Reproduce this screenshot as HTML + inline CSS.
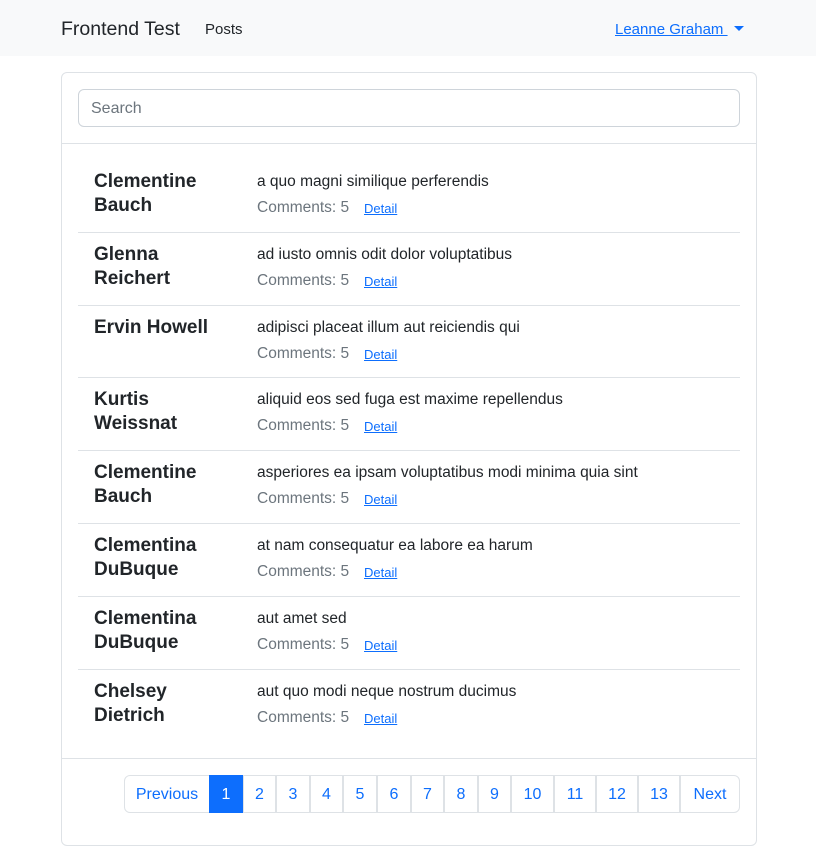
<!DOCTYPE html><html><head><style>
*{box-sizing:border-box}body{margin:0;font-family:"Liberation Sans",sans-serif;color:#212529;background:#fff;width:816px;height:857px;position:relative;overflow:hidden}
.nav{position:absolute;left:0;top:0;width:816px;height:56px;background:#f8f9fa}
.a{position:absolute;white-space:nowrap}
.card{position:absolute;left:61px;top:72px;width:696px;height:774px;border:1px solid #dee2e6;border-radius:6px}
.search{position:absolute;left:78px;top:89px;width:662px;height:38px;border:1px solid #ced4da;border-radius:6px;padding:0 12px;line-height:38px;font-size:16px;color:#6c757d}
.hr{position:absolute;height:1px;background:#dee2e6}
.name{position:absolute;left:94px;font-size:19px;font-weight:bold;line-height:24px}
.t{position:absolute;left:257px;font-size:15.5px}
.c{position:absolute;left:257px;font-size:15.5px;color:#6c757d}
.d{position:absolute;left:364px;font-size:13px;color:#0d6efd;text-decoration:underline}
.pg{position:absolute;top:775px;height:38px;border:1px solid #dee2e6;margin-left:-1px;color:#0d6efd;font-size:16px;text-align:center;line-height:38px}
</style></head><body>
<div class="nav"></div>
<div class="a" style="left:61px;top:18px;font-size:19.5px">Frontend Test</div>
<div class="a" style="left:205px;top:21px;font-size:15px">Posts</div>
<div class="a" style="left:615px;top:21px;font-size:15px;color:#0d6efd;text-decoration:underline">Leanne Graham&nbsp;</div>
<div class="a" style="left:734px;top:26px;width:0;height:0;border-left:5px solid transparent;border-right:5px solid transparent;border-top:5px solid #0d6efd"></div>
<div class="card"></div>
<div class="search">Search</div>
<div class="hr" style="left:62px;top:143px;width:694px"></div>
<div class="hr" style="left:62px;top:758px;width:694px"></div>
<div class="name" style="top:170px">Clementine<br>Bauch</div><div class="t" style="top:173px">a quo magni similique perferendis</div><div class="c" style="top:199px">Comments: 5</div><div class="d" style="top:201px">Detail</div>
<div class="hr" style="left:78px;top:232px;width:662px"></div>
<div class="name" style="top:243px">Glenna<br>Reichert</div><div class="t" style="top:246px">ad iusto omnis odit dolor voluptatibus</div><div class="c" style="top:272px">Comments: 5</div><div class="d" style="top:274px">Detail</div>
<div class="hr" style="left:78px;top:305px;width:662px"></div>
<div class="name" style="top:316px">Ervin Howell</div><div class="t" style="top:319px">adipisci placeat illum aut reiciendis qui</div><div class="c" style="top:345px">Comments: 5</div><div class="d" style="top:347px">Detail</div>
<div class="hr" style="left:78px;top:377px;width:662px"></div>
<div class="name" style="top:388px">Kurtis<br>Weissnat</div><div class="t" style="top:391px">aliquid eos sed fuga est maxime repellendus</div><div class="c" style="top:417px">Comments: 5</div><div class="d" style="top:419px">Detail</div>
<div class="hr" style="left:78px;top:450px;width:662px"></div>
<div class="name" style="top:461px">Clementine<br>Bauch</div><div class="t" style="top:464px">asperiores ea ipsam voluptatibus modi minima quia sint</div><div class="c" style="top:490px">Comments: 5</div><div class="d" style="top:492px">Detail</div>
<div class="hr" style="left:78px;top:523px;width:662px"></div>
<div class="name" style="top:534px">Clementina<br>DuBuque</div><div class="t" style="top:537px">at nam consequatur ea labore ea harum</div><div class="c" style="top:563px">Comments: 5</div><div class="d" style="top:565px">Detail</div>
<div class="hr" style="left:78px;top:596px;width:662px"></div>
<div class="name" style="top:607px">Clementina<br>DuBuque</div><div class="t" style="top:610px">aut amet sed</div><div class="c" style="top:636px">Comments: 5</div><div class="d" style="top:638px">Detail</div>
<div class="hr" style="left:78px;top:669px;width:662px"></div>
<div class="name" style="top:680px">Chelsey<br>Dietrich</div><div class="t" style="top:683px">aut quo modi neque nostrum ducimus</div><div class="c" style="top:709px">Comments: 5</div><div class="d" style="top:711px">Detail</div>
<div class="pg" style="left:125px;width:86px;border-radius:6px 0 0 6px">Previous</div>
<div class="pg" style="left:210px;width:34px;background:#0d6efd;border-color:#0d6efd;color:#fff">1</div>
<div class="pg" style="left:244px;width:33px">2</div>
<div class="pg" style="left:277px;width:34px">3</div>
<div class="pg" style="left:311px;width:33px">4</div>
<div class="pg" style="left:344px;width:34px">5</div>
<div class="pg" style="left:378px;width:34px">6</div>
<div class="pg" style="left:412px;width:33px">7</div>
<div class="pg" style="left:445px;width:34px">8</div>
<div class="pg" style="left:479px;width:33px">9</div>
<div class="pg" style="left:512px;width:43px">10</div>
<div class="pg" style="left:555px;width:42px">11</div>
<div class="pg" style="left:597px;width:42px">12</div>
<div class="pg" style="left:639px;width:42px">13</div>
<div class="pg" style="left:681px;width:60px;border-radius:0 6px 6px 0">Next</div>
</body></html>
